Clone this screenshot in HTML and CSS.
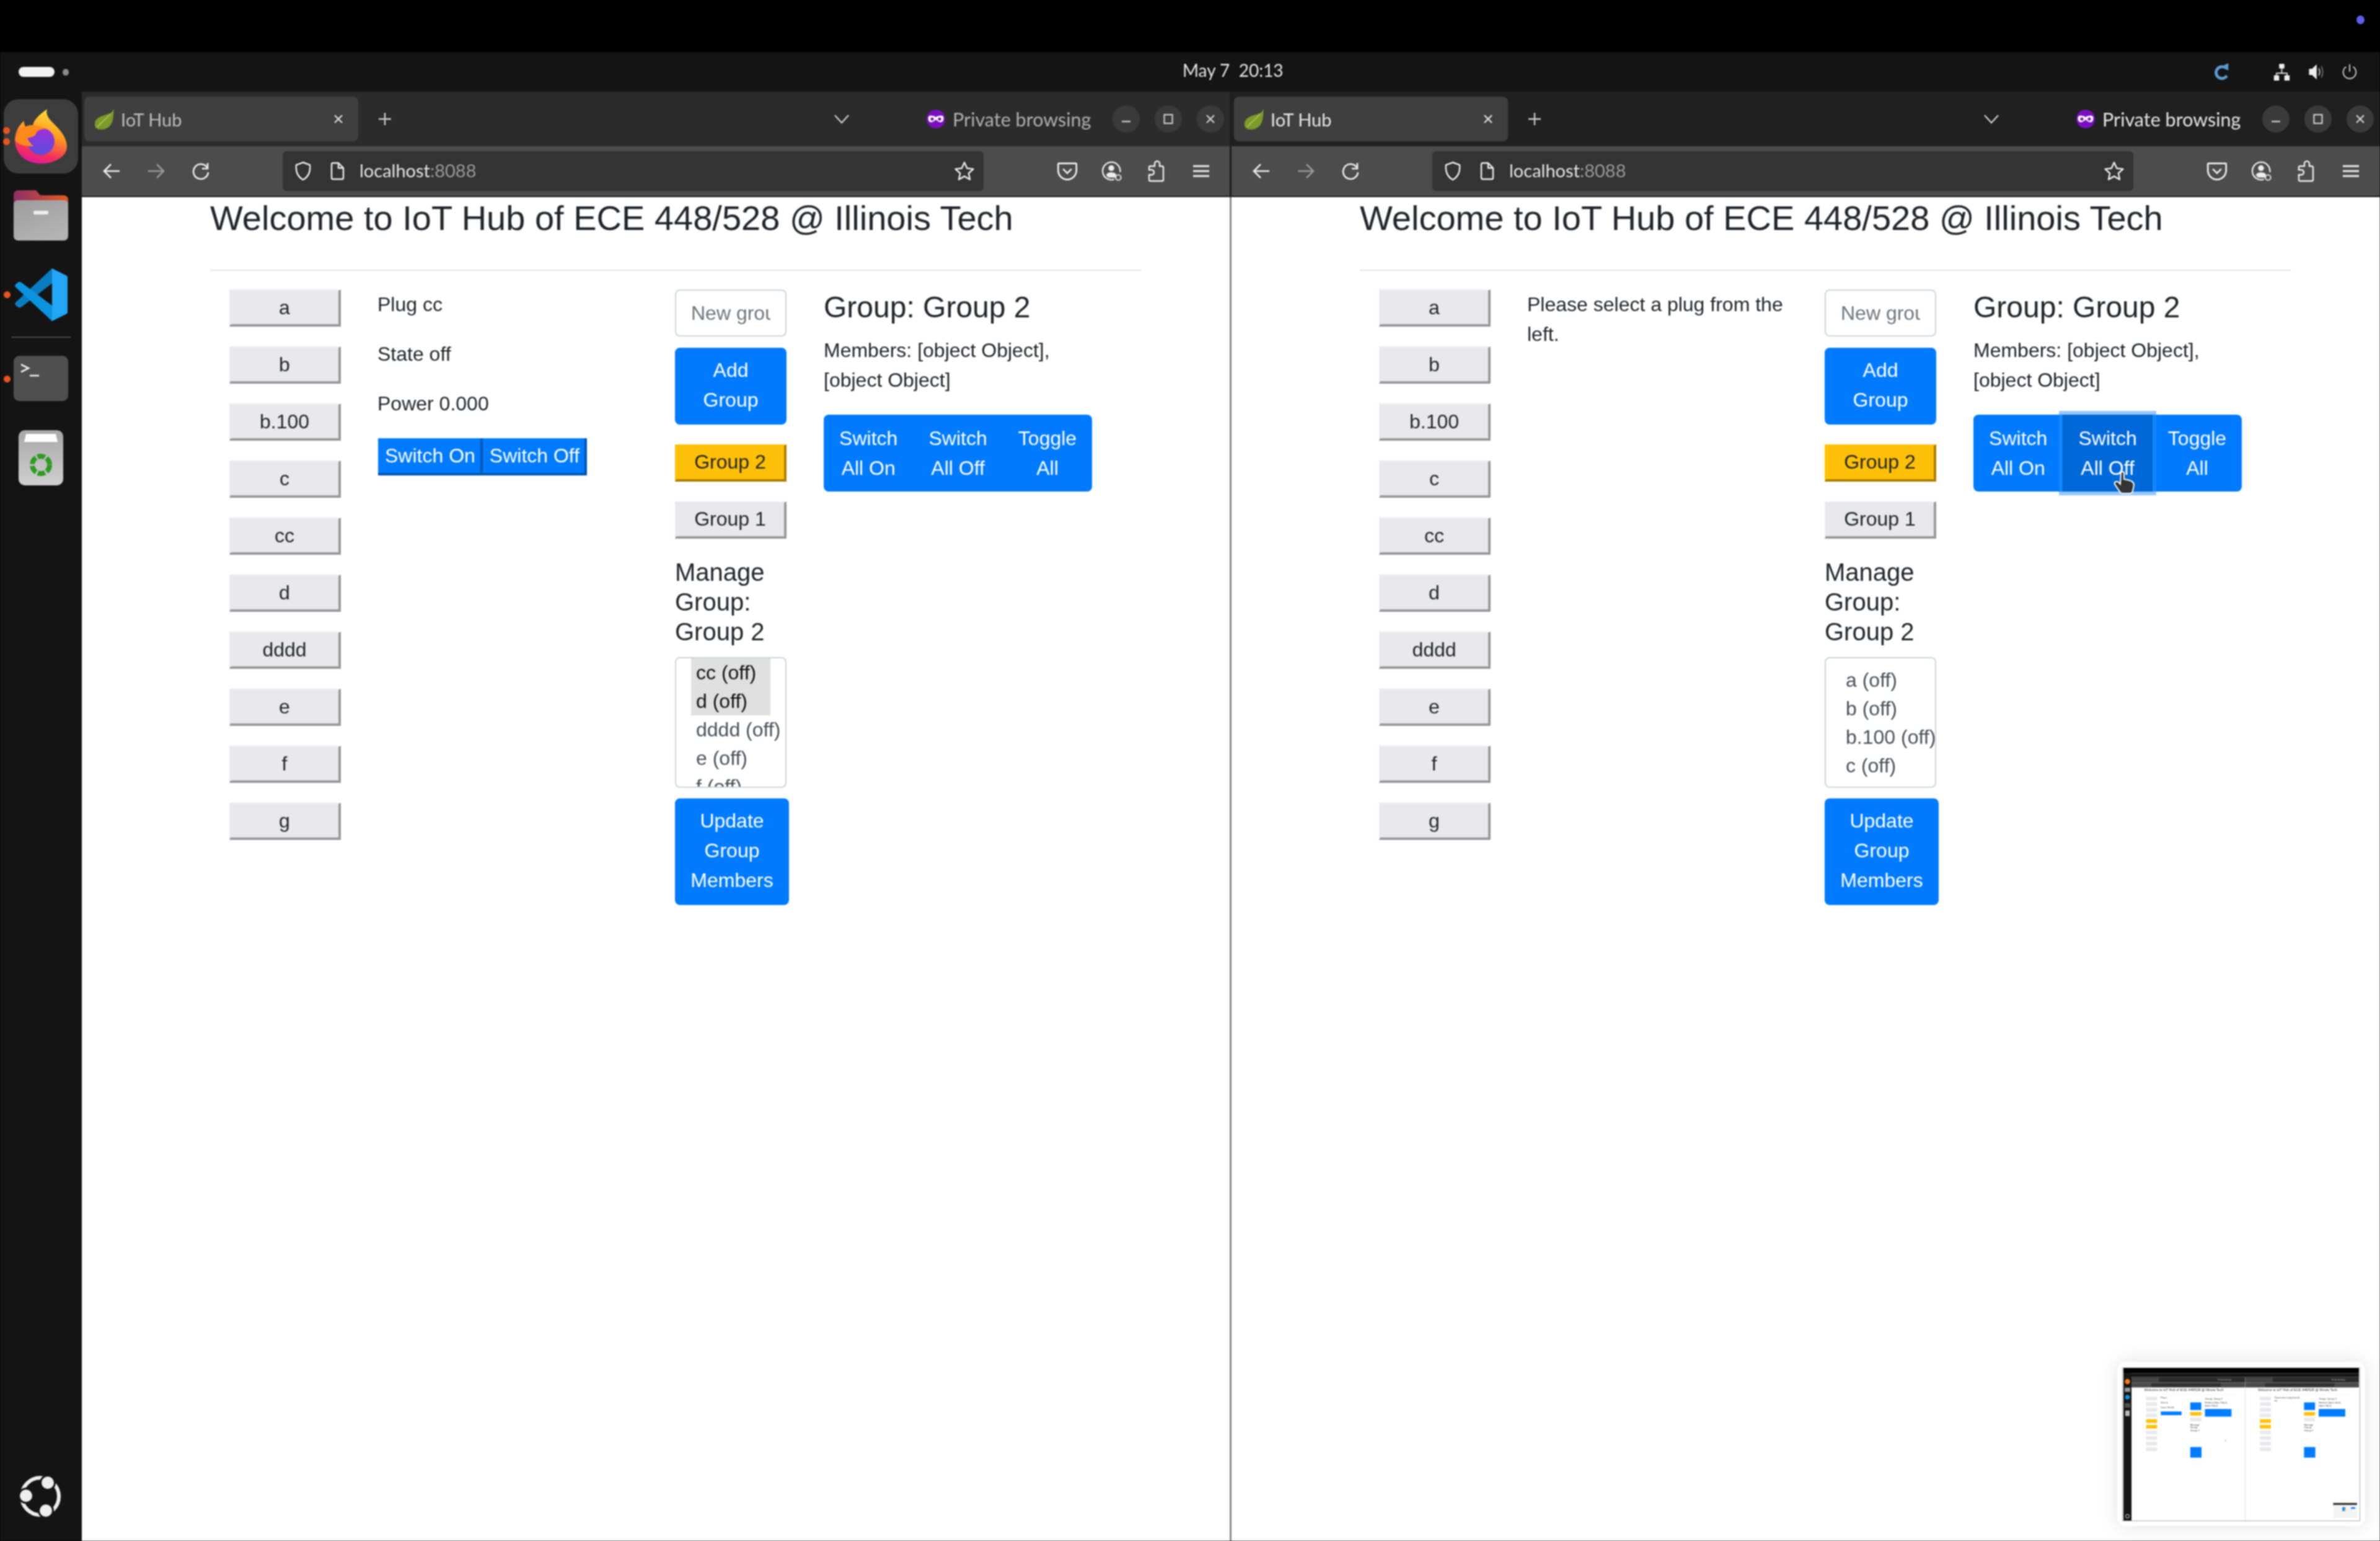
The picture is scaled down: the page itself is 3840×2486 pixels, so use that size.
FILE: index.html
```html
<!DOCTYPE html>
<html lang="en">
<head>
  <meta charset="UTF-8">
  <title>IoT Hub</title>
  <link rel="stylesheet" href="styles.css">
</head>
<body>
  <svg class="sprites">
    <symbol id="i-leaf" viewBox="0 0 33 34"><path d="M31 0C30 6 27 8 19 10 8 13 0 17 1 27c0 4 4 7 10 7 10 0 17-6 19-16 1-6 2-12 1-18z" fill="#7d9a2c"/><path d="M26 9C20 16 12 22 5 30" stroke="#a8bf45" stroke-width="2" fill="none"/></symbol>
    <symbol id="i-close" viewBox="0 0 20 20"><path d="M4 4l12 12M16 4L4 16" stroke="currentColor" stroke-width="2.4" fill="none"/></symbol>
    <symbol id="i-plus" viewBox="0 0 24 24"><path d="M12 2v20M2 12h20" stroke="currentColor" stroke-width="2.4" fill="none"/></symbol>
    <symbol id="i-chevron" viewBox="0 0 26 16"><path d="M2 2l11 12L24 2" stroke="currentColor" stroke-width="2.4" fill="none"/></symbol>
    <symbol id="i-private" viewBox="0 0 30 30"><circle cx="15" cy="15" r="15" fill="#7a0fc0"/><path d="M3 11c3-2 7-2 12 1 5-3 9-3 12-1 1 4 0 8-3 9-4 1-6-2-9-4-3 2-5 5-9 4-3-1-4-5-3-9z" fill="#fff"/><circle cx="9" cy="15" r="2.6" fill="#7a0fc0"/><circle cx="21" cy="15" r="2.6" fill="#7a0fc0"/></symbol>
    <symbol id="i-min" viewBox="0 0 20 20"><path d="M3 14h14" stroke="currentColor" stroke-width="2.4"/></symbol>
    <symbol id="i-max" viewBox="0 0 20 20"><rect x="3.5" y="3" width="13" height="14" stroke="currentColor" stroke-width="2.2" fill="none"/></symbol>
    <symbol id="i-back" viewBox="0 0 30 30"><path d="M28 15H3M14 4L3 15l11 11" stroke="currentColor" stroke-width="2.6" fill="none"/></symbol>
    <symbol id="i-forward" viewBox="0 0 30 30"><path d="M2 15h25M16 4l11 11-11 11" stroke="currentColor" stroke-width="2.6" fill="none"/></symbol>
    <symbol id="i-reload" viewBox="0 0 30 30"><path d="M25 9A12 12 0 1 0 27 17" stroke="currentColor" stroke-width="2.6" fill="none"/><path d="M26 2v9h-9" stroke="currentColor" stroke-width="2.6" fill="none"/></symbol>
    <symbol id="i-shield" viewBox="0 0 28 32"><path d="M14 2l11 4c1 10-2 19-11 24C5 25 2 16 3 6z" stroke="currentColor" stroke-width="2.4" fill="none"/></symbol>
    <symbol id="i-doc" viewBox="0 0 24 30"><path d="M3 4q0-2 2-2h9l8 8v16q0 2-2 2H5q-2 0-2-2zM14 2v8h8" stroke="currentColor" stroke-width="2.4" fill="none"/></symbol>
    <symbol id="i-star" viewBox="0 0 34 34"><path d="M17 3l4.300 9.500 10.200 1.100-7.600 6.900 2.100 10.100-9-5.200-9 5.200 2.100-10.100-7.600-6.900 10.200-1.100z" stroke="currentColor" stroke-width="2.400" fill="none" stroke-linejoin="round"/></symbol>
    <symbol id="i-pocket" viewBox="0 0 30 30"><path d="M3 4h24q1 0 1 1v9a13 13 0 0 1-26 0V5q0-1 1-1z" stroke="currentColor" stroke-width="2.400" fill="none"/><path d="M9 12l6 6 6-6" stroke="currentColor" stroke-width="2.400" fill="none"/></symbol>
    <symbol id="i-account" viewBox="0 0 36 36"><path d="M22 32a15 15 0 1 1 10-12" stroke="currentColor" stroke-width="2.400" fill="none"/><circle cx="17" cy="13" r="5" fill="currentColor"/><path d="M8 25c2-6 14-6 17-2v6H12z" fill="currentColor"/><circle cx="29" cy="29" r="4.500" stroke="currentColor" stroke-width="2" fill="none"/></symbol>
    <symbol id="i-puzzle" viewBox="0 0 30 36"><path d="M5 34q-2 0-2-2v-8h4a4 4 0 0 0 0-8H3v-4q0-2 2-2h7V6a4 4 0 0 1 8 0v4h3q3 0 3 2v20q0 2-2 2z" stroke="currentColor" stroke-width="2.400" fill="none"/></symbol>
    <symbol id="i-menu" viewBox="0 0 26 20"><path d="M0 2h26M0 10h26M0 18h26" stroke="currentColor" stroke-width="2.800"/></symbol>
  </svg>

  <div class="desktop">
    <div class="top-strip"><span class="rec-dot"></span></div>

    <div class="panel">
      <div class="panel-left"><span class="pill"></span><span class="pill-dot"></span></div>
      <div class="clock">May 7&nbsp; 20:13</div>
      <div class="tray">
        <svg class="tray-sync" viewBox="0 0 28 38"><path d="M20 10A12 12 0 1 0 24 27" stroke="#5b9bd5" stroke-width="6" fill="none"/><path d="M12 9L27 1v15z" fill="#5b9bd5"/></svg>
        <svg class="tray-net" viewBox="0 0 32 32"><path d="M16 8v10M6 24v-6h20v6" stroke="#eee" stroke-width="2" fill="none"/><rect x="11" y="0" width="10" height="9" rx="1" fill="#eee"/><rect x="1" y="22" width="10" height="10" rx="1" fill="#eee"/><rect x="21" y="22" width="10" height="10" rx="1" fill="#eee"/></svg>
        <svg class="tray-vol" viewBox="0 0 30 34"><path d="M1 11h6l9-9v30l-9-9H1z" fill="#eee"/><path d="M20 10q4 7 0 14" stroke="#bbb" stroke-width="2.400" fill="none"/><path d="M25 6q6 11 0 22" stroke="#777" stroke-width="2" fill="none"/></svg>
        <svg class="tray-power" viewBox="0 0 30 34"><path d="M15 1v15" stroke="#ccc" stroke-width="2.400"/><path d="M8 6a13 13 0 1 0 14 0" stroke="#ccc" stroke-width="2.400" fill="none"/></svg>
      </div>
    </div>

    <div class="main">
      <div class="dock">
        <div class="dock-tile">
          <span class="run-dot run-dot-a"></span>
          <span class="run-dot run-dot-b"></span>
          <svg class="dock-firefox" viewBox="0 0 84 88">
            <defs>
              <linearGradient id="ff-outer" x1="0.7" y1="0" x2="0.4" y2="1">
                <stop offset="0" stop-color="#ffe53b"/><stop offset="0.45" stop-color="#ff9a1f"/><stop offset="0.8" stop-color="#f5305a"/><stop offset="1" stop-color="#e0189a"/>
              </linearGradient>
              <linearGradient id="ff-ball" x1="0.5" y1="0" x2="0.5" y2="1">
                <stop offset="0" stop-color="#a02fd8"/><stop offset="1" stop-color="#5a4ee0"/>
              </linearGradient>
            </defs>
            <path d="M52 0C48 12 60 20 70 31c9 10 14 20 14 30A42 27 0 0 1 42 88C18 88 0 72 0 50c0-12 5-20 9-25l5-6 3 11c3-3 8-4 12-4 2-10 12-18 23-26z" fill="url(#ff-outer)"/>
            <circle cx="42" cy="52" r="22" fill="url(#ff-ball)"/>
            <path d="M0 50c2-10 10-22 24-24 8-1 18 2 26 6-8 0-14 2-16 8-2 4-8 6-14 6 2 6 6 10 10 14-12 0-24-2-30-10z" fill="#ff8a1c"/>
          </svg>
        </div>
        <svg class="dock-files" viewBox="0 0 88 81">
          <defs>
            <linearGradient id="files-back" x1="0" y1="0" x2="1" y2="0"><stop offset="0" stop-color="#8f2e68"/><stop offset="1" stop-color="#e05a20"/></linearGradient>
            <linearGradient id="files-front" x1="0" y1="0" x2="0.6" y2="1"><stop offset="0" stop-color="#9c9c9c"/><stop offset="1" stop-color="#b4b4b4"/></linearGradient>
          </defs>
          <path d="M0 8q0-8 8-8h28l7 8h37q8 0 8 8v30H0z" fill="url(#files-back)"/>
          <rect x="0" y="16" width="88" height="65" rx="7" fill="url(#files-front)"/>
          <rect x="32" y="33" width="24" height="6" rx="2" fill="#eee"/>
        </svg>
        <div class="dock-code">
          <span class="run-dot run-dot-c"></span>
          <svg class="dock-vscode" viewBox="0 0 85 85">
            <path d="M60 0v24L11 62q-4 3-8-1l-2-2q-2-3 1-5z" fill="#0a7cc2"/>
            <path d="M60 85V60L11 23q-4-3-8 1l-2 2q-2 3 1 5z" fill="#0c93e0"/>
            <path d="M60 0l22 11q3 1 3 4v55q0 3-3 4L60 85z" fill="#22a6f7"/>
          </svg>
        </div>
        <div class="dock-sep"></div>
        <div class="dock-term">
          <span class="run-dot run-dot-d"></span>
          <svg class="term-prompt" viewBox="0 0 30 24"><path d="M1 3l12 6-12 6" stroke="#eee" stroke-width="2.600" fill="none"/><path d="M15 21h15" stroke="#eee" stroke-width="2.600"/></svg>
        </div>
        <svg class="dock-trash" viewBox="0 0 72 89">
          <defs><linearGradient id="trash-body" x1="0" y1="0" x2="0" y2="1"><stop offset="0" stop-color="#a8a8a8"/><stop offset="1" stop-color="#d0d0d0"/></linearGradient></defs>
          <rect width="72" height="89" rx="10" fill="url(#trash-body)"/>
          <path d="M9 19l3-13h48l3 13z" fill="#fff"/>
          <circle cx="36" cy="56" r="14" stroke="#2f9a22" stroke-width="8" stroke-dasharray="12 3" fill="none"/>
        </svg>
        <svg class="dock-ubuntu" viewBox="0 0 72 72">
          <circle cx="35" cy="35" r="30" stroke="#eee" stroke-width="6" fill="none"/>
          <circle cx="12" cy="34" r="13" fill="#141414"/><circle cx="47" cy="13" r="13" fill="#141414"/><circle cx="44" cy="58" r="13" fill="#141414"/>
          <circle cx="12" cy="34" r="10" fill="#eee"/><circle cx="47" cy="13" r="10" fill="#eee"/><circle cx="44" cy="58" r="10" fill="#eee"/>
        </svg>
      </div>

      <div class="window window-left">
        <div class="tabbar">
          <div class="tab">
            <svg class="fav"><use href="#i-leaf"/></svg>
            <span class="tab-title">IoT Hub</span>
            <svg class="tab-close"><use href="#i-close"/></svg>
          </div>
          <svg class="new-tab"><use href="#i-plus"/></svg>
          <svg class="tab-list"><use href="#i-chevron"/></svg>
          <svg class="private-icon"><use href="#i-private"/></svg>
          <span class="private-label">Private browsing</span>
          <div class="win-controls">
            <span class="win-btn"><svg><use href="#i-min"/></svg></span>
            <span class="win-btn"><svg><use href="#i-max"/></svg></span>
            <span class="win-btn"><svg><use href="#i-close"/></svg></span>
          </div>
        </div>
        <div class="toolbar">
          <div class="nav-btns">
            <svg class="tool"><use href="#i-back"/></svg>
            <svg class="tool tool-dim"><use href="#i-forward"/></svg>
            <svg class="tool"><use href="#i-reload"/></svg>
          </div>
          <div class="urlbar">
            <svg class="url-shield"><use href="#i-shield"/></svg>
            <svg class="url-doc"><use href="#i-doc"/></svg>
            <span class="url-text">localhost<span class="url-port">:8088</span></span>
            <svg class="url-star"><use href="#i-star"/></svg>
          </div>
          <div class="tool-right">
            <svg class="tool2"><use href="#i-pocket"/></svg>
            <svg class="tool2"><use href="#i-account"/></svg>
            <svg class="tool2"><use href="#i-puzzle"/></svg>
            <svg class="tool-menu"><use href="#i-menu"/></svg>
          </div>
        </div>
        <div class="page">
          <h1>Welcome to IoT Hub of ECE 448/528 @ Illinois Tech</h1>
          <hr>
          <div class="hub">
            <div class="plug-list">
              <button class="plug">a</button>
              <button class="plug">b</button>
              <button class="plug">b.100</button>
              <button class="plug">c</button>
              <button class="plug">cc</button>
              <button class="plug">d</button>
              <button class="plug">dddd</button>
              <button class="plug">e</button>
              <button class="plug">f</button>
              <button class="plug">g</button>
            </div>
            <div class="plug-detail">
              <p>Plug cc</p>
              <p>State off</p>
              <p>Power 0.000</p>
              <div class="switches">
                <button class="switch">Switch On</button><button class="switch">Switch Off</button>
              </div>
            </div>
            <div class="group-col">
              <input class="group-input" type="text" placeholder="New group">
              <button class="btn-primary add-group">Add Group</button>
              <button class="plug plug-on">Group 2</button>
              <button class="plug">Group 1</button>
              <h5>Manage Group: Group 2</h5>
              <div class="member-select scrolled">
                <div class="opt opt-sel">cc (off)</div>
                <div class="opt opt-sel">d (off)</div>
                <div class="opt">dddd (off)</div>
                <div class="opt">e (off)</div>
                <div class="opt">f (off)</div>
              </div>
              <button class="btn-primary update-btn">Update Group Members</button>
            </div>
            <div class="group-detail">
              <h4>Group: Group 2</h4>
              <p>Members: [object Object], [object Object]</p>
              <div class="btn-group">
                <button class="btn-primary">Switch All On</button>
                <button class="btn-primary">Switch All Off</button>
                <button class="btn-primary">Toggle All</button>
              </div>
            </div>
          </div>
        </div>
      </div>

      <div class="window window-right">
        <div class="tabbar">
          <div class="tab">
            <svg class="fav"><use href="#i-leaf"/></svg>
            <span class="tab-title">IoT Hub</span>
            <svg class="tab-close"><use href="#i-close"/></svg>
          </div>
          <svg class="new-tab"><use href="#i-plus"/></svg>
          <svg class="tab-list"><use href="#i-chevron"/></svg>
          <svg class="private-icon"><use href="#i-private"/></svg>
          <span class="private-label">Private browsing</span>
          <div class="win-controls">
            <span class="win-btn"><svg><use href="#i-min"/></svg></span>
            <span class="win-btn"><svg><use href="#i-max"/></svg></span>
            <span class="win-btn"><svg><use href="#i-close"/></svg></span>
          </div>
        </div>
        <div class="toolbar">
          <div class="nav-btns">
            <svg class="tool"><use href="#i-back"/></svg>
            <svg class="tool tool-dim"><use href="#i-forward"/></svg>
            <svg class="tool"><use href="#i-reload"/></svg>
          </div>
          <div class="urlbar">
            <svg class="url-shield"><use href="#i-shield"/></svg>
            <svg class="url-doc"><use href="#i-doc"/></svg>
            <span class="url-text">localhost<span class="url-port">:8088</span></span>
            <svg class="url-star"><use href="#i-star"/></svg>
          </div>
          <div class="tool-right">
            <svg class="tool2"><use href="#i-pocket"/></svg>
            <svg class="tool2"><use href="#i-account"/></svg>
            <svg class="tool2"><use href="#i-puzzle"/></svg>
            <svg class="tool-menu"><use href="#i-menu"/></svg>
          </div>
        </div>
        <div class="page">
          <h1>Welcome to IoT Hub of ECE 448/528 @ Illinois Tech</h1>
          <hr>
          <div class="hub">
            <div class="plug-list">
              <button class="plug">a</button>
              <button class="plug">b</button>
              <button class="plug">b.100</button>
              <button class="plug">c</button>
              <button class="plug">cc</button>
              <button class="plug">d</button>
              <button class="plug">dddd</button>
              <button class="plug">e</button>
              <button class="plug">f</button>
              <button class="plug">g</button>
            </div>
            <div class="plug-detail">
              <p>Please select a plug from the left.</p>
            </div>
            <div class="group-col">
              <input class="group-input" type="text" placeholder="New group">
              <button class="btn-primary add-group">Add Group</button>
              <button class="plug plug-on">Group 2</button>
              <button class="plug">Group 1</button>
              <h5>Manage Group: Group 2</h5>
              <div class="member-select">
                <div class="opt">a (off)</div>
                <div class="opt">b (off)</div>
                <div class="opt">b.100 (off)</div>
                <div class="opt">c (off)</div>
                <div class="opt">cc (off)</div>
              </div>
              <button class="btn-primary update-btn">Update Group Members</button>
            </div>
            <div class="group-detail">
              <h4>Group: Group 2</h4>
              <p>Members: [object Object], [object Object]</p>
              <div class="btn-group">
                <button class="btn-primary">Switch All On</button>
                <button class="btn-primary btn-hover">Switch All Off
                  <svg class="hand" viewBox="0 0 36 38"><path d="M12 2q3-2 5 0v11l9 2q7 2 7 8l-2 9q-1 4-5 4H15q-3 0-5-3L2 21q-1-3 2-4 2-1 4 1l3 3z" fill="#333" stroke="#fff" stroke-width="2"/></svg>
                </button>
                <button class="btn-primary">Toggle All</button>
              </div>
            </div>
          </div>
        </div>
      </div>
    </div>

    <!-- screenshot preview, bottom right -->
    <div class="preview">
      <svg class="preview-shot" viewBox="0 0 3840 2486">
        <defs>
          <filter id="soft"><feGaussianBlur stdDeviation="5"/></filter>
          <g id="mini-win">
            <rect x="132" y="148" width="1853" height="88" fill="#2a2a2a"/>
            <rect x="136" y="156" width="442" height="72" rx="8" fill="#444"/>
            <rect x="132" y="236" width="1853" height="80" fill="#4c4c4c"/>
            <rect x="456" y="244" width="1131" height="64" rx="6" fill="#333"/>
            <text x="1537" y="202" class="mini-small" fill="#bbb">Private browsing</text>
            <text x="339" y="372" class="mini-h">Welcome to IoT Hub of ECE 448/528 @ Illinois Tech</text>
            <rect x="339" y="435" width="1500" height="2" fill="#ddd"/>
            <g fill="#e9e9ed">
              <rect x="370" y="466" width="180" height="60"/><rect x="370" y="558" width="180" height="60"/><rect x="370" y="650" width="180" height="60"/><rect x="370" y="742" width="180" height="60"/>
              <rect x="370" y="1018" width="180" height="60"/><rect x="370" y="1110" width="180" height="60"/><rect x="370" y="1202" width="180" height="60"/><rect x="370" y="1294" width="180" height="60"/>
              <rect x="1090" y="808" width="180" height="60"/>
            </g>
            <rect x="370" y="834" width="180" height="60" fill="#ffc107"/><rect x="370" y="926" width="180" height="60" fill="#ffc107"/><rect x="1090" y="716" width="180" height="60" fill="#ffc107"/>
            <rect x="1090" y="560" width="180" height="124" fill="#007bff"/><rect x="1090" y="1288" width="184" height="172" fill="#007bff"/><rect x="1329" y="668" width="433" height="124" fill="#007bff"/>
            <text x="1330" y="512" class="mini-t2">Group: Group 2</text>
            <text x="1330" y="575" class="mini-t">Members: [object Object],</text><text x="1330" y="623" class="mini-t">[object Object]</text>
            <text x="1090" y="935" class="mini-t2">Manage</text><text x="1090" y="983" class="mini-t2">Group:</text><text x="1090" y="1031" class="mini-t2">Group 2</text>
          </g>
        </defs>
        <rect width="3840" height="2486" fill="#fff"/>
        <g filter="url(#soft)">
          <rect width="3840" height="84"/>
          <rect y="84" width="3840" height="64" fill="#141414"/>
          <rect y="84" width="132" height="2402" fill="#141414"/>
          <use href="#mini-win"/>
          <use href="#mini-win" x="1855"/>
          <rect x="1985" y="318" width="3" height="2168" fill="#999"/>
          <rect x="610" y="708" width="338" height="60" fill="#007bff"/>
          <circle cx="66" cy="220" r="42" fill="#ff7a1a"/><rect x="22" y="320" width="88" height="68" fill="#999"/><circle cx="66" cy="476" r="38" fill="#0c93e0"/><rect x="22" y="573" width="88" height="73" fill="#4f4f4f"/><rect x="30" y="693" width="72" height="89" fill="#bbb"/><circle cx="65" cy="2415" r="30" fill="none" stroke="#eee" stroke-width="10"/>
          <text x="609" y="500" class="mini-t">Plug cc</text><text x="609" y="580" class="mini-t">State on</text><text x="609" y="660" class="mini-t">Power 139.043</text>
          <text x="2464" y="500" class="mini-t">Please select a plug from the</text><text x="2464" y="548" class="mini-t">left.</text>
          <rect x="3420" y="2200" width="390" height="246" fill="#f4f4f4"/><rect x="3420" y="2200" width="390" height="30" fill="#222"/><rect x="3570" y="2270" width="50" height="60" fill="#007bff"/><rect x="3710" y="2270" width="70" height="24" fill="#007bff"/><rect x="3600" y="2290" width="16" height="40" fill="#ffc107"/>
          <rect x="1658" y="1175" width="10" height="14" fill="#333"/>
        </g>
      </svg>
    </div>
  </div>
</body>
</html>
```

FILE: styles.css
```css
* {
  box-sizing: border-box;
}

body {
  margin: 0;
  background: #000;
  font-family: "Liberation Sans", Arial, sans-serif;
  color: #212529;
}

.sprites {
  display: none;
}

/* the reference is an upscaled capture, so everything sits a little soft */
.desktop {
  position: relative;
  width: 3840px;
  height: 2486px;
  overflow: hidden;
  display: flex;
  flex-direction: column;
  filter: blur(0.8px);
}

/* top of the desktop */
.top-strip {
  height: 84px;
  background: #000;
  position: relative;
}

.rec-dot {
  position: absolute;
  left: 3802px;
  top: 25px;
  width: 13px;
  height: 14px;
  border-radius: 50%;
  background: #5f5fe8;
}

.panel {
  height: 64px;
  background: #141414;
  display: flex;
  align-items: center;
  font-family: Lato, "Noto Sans", sans-serif;
}

.panel-left {
  width: 1908px;
  flex: none;
  padding-left: 30px;
  display: flex;
  align-items: center;
  gap: 13px;
}

.pill {
  width: 58px;
  height: 16px;
  border-radius: 8px;
  background: #f2f2f2;
}

.pill-dot {
  width: 10px;
  height: 11px;
  border-radius: 50%;
  background: #8a8a8a;
}

.clock {
  font-size: 28px;
  line-height: 28px;
  color: #e4e4e4;
  margin-top: -6px;
}

.tray {
  display: flex;
  align-items: center;
  justify-content: flex-end;
  margin-left: auto;
  padding-right: 35px;
}

.tray-sync {
  width: 26px;
  height: 30px;
}

.tray-net {
  width: 31px;
  height: 27px;
  margin-left: 68px;
}

.tray-vol {
  width: 28px;
  height: 28px;
  margin-left: 26px;
}

.tray-power {
  width: 28px;
  height: 27px;
  margin-left: 26px;
}

.main {
  flex: 1;
  display: flex;
  min-height: 0;
}

/* dock */
.dock {
  width: 132px;
  flex: none;
  background: #141414;
  display: flex;
  flex-direction: column;
  align-items: center;
  padding-top: 12px;
  padding-bottom: 35px;
}

.dock-tile {
  position: relative;
  width: 120px;
  height: 120px;
  border-radius: 24px;
  background: #3c3c3c;
  display: flex;
  align-items: center;
  justify-content: center;
}

.dock-firefox {
  width: 84px;
  height: 88px;
}

.dock-files {
  width: 88px;
  height: 81px;
  margin-top: 27px;
}

.dock-code {
  width: 132px;
  height: 85px;
  margin-top: 45px;
  display: flex;
  justify-content: center;
  position: relative;
}

.dock-vscode {
  width: 85px;
  height: 85px;
}

.dock-sep {
  width: 96px;
  height: 2px;
  background: #444;
  margin-top: 25px;
}

.dock-term {
  position: relative;
  width: 88px;
  height: 73px;
  margin-top: 29px;
  border-radius: 9px;
  background: #4f4f4f;
}

.term-prompt {
  position: absolute;
  left: 11px;
  top: 11px;
  width: 30px;
  height: 24px;
}

.dock-trash {
  width: 72px;
  height: 89px;
  margin-top: 47px;
}

.dock-ubuntu {
  width: 72px;
  height: 72px;
  margin-top: auto;
}

.run-dot {
  position: absolute;
  width: 11px;
  height: 11px;
  border-radius: 50%;
  background: #e9541f;
}

.run-dot-a {
  left: -1px;
  top: 45px;
}

.run-dot-b {
  left: -1px;
  top: 63px;
}

.run-dot-c {
  left: 6px;
  top: 37px;
}

.run-dot-d {
  left: -16px;
  top: 32px;
}

/* browser window */
.window {
  width: 1853px;
  flex: none;
  display: flex;
  flex-direction: column;
  background: #fff;
}

.window-left {
  width: 1855px;
}

.window-left .tabbar,
.window-left .toolbar {
  border-right: 3px solid #1e1e1e;
}

.window-left .page {
  border-right: 3px solid #8a8a8a;
}

.tabbar {
  height: 88px;
  background: #2b2b2b;
  display: flex;
  align-items: center;
  padding-left: 4px;
  font-family: Lato, "Noto Sans", sans-serif;
}

.window-right .tabbar {
  background: #202020;
}

.tab {
  width: 442px;
  height: 72px;
  border-radius: 8px;
  background: #3f3f3f;
  display: flex;
  align-items: center;
  padding-left: 16px;
  color: #bdbdbd;
  font-size: 29px;
}

.window-right .tab {
  color: #e8e8e8;
}

.fav {
  width: 33px;
  height: 34px;
}

.tab-title {
  margin-left: 10px;
}

.tab-close {
  width: 20px;
  height: 20px;
  margin-left: auto;
  margin-right: 22px;
  color: #ddd;
}

.new-tab {
  width: 24px;
  height: 24px;
  margin-left: 31px;
  color: #ccc;
}

.tab-list {
  width: 26px;
  height: 16px;
  margin-left: 712px;
  color: #ccc;
}

.private-icon {
  width: 30px;
  height: 30px;
  margin-left: 124px;
}

.private-label {
  width: 221px;
  margin-left: 12px;
  font-size: 30.5px;
  color: #b0b0b0;
  white-space: nowrap;
}

.window-right .private-label {
  color: #e4e4e4;
}

.win-controls {
  display: flex;
  flex: none;
  gap: 24px;
  margin-left: 37px;
}

.win-btn {
  width: 44px;
  height: 44px;
  border-radius: 50%;
  background: #3a3a3a;
  display: flex;
  align-items: center;
  justify-content: center;
  color: #ccc;
}

.win-btn svg {
  width: 20px;
  height: 20px;
}

.toolbar {
  height: 82px;
  background: #4c4c4c;
  border-bottom: 2px solid #1c1c1c;
  display: flex;
  align-items: center;
  padding-left: 33px;
  color: #eee;
  font-family: Lato, "Noto Sans", sans-serif;
}

.nav-btns {
  display: flex;
  gap: 42px;
}

.tool {
  width: 30px;
  height: 30px;
}

.tool-dim {
  color: #999;
}

.urlbar {
  width: 1131px;
  height: 64px;
  margin-left: 117px;
  border-radius: 6px;
  background: #333;
  display: flex;
  align-items: center;
  padding: 0 14px 0 19px;
}

.url-shield {
  width: 28px;
  height: 32px;
}

.url-doc {
  width: 24px;
  height: 30px;
  margin-left: 29px;
}

.url-text {
  margin-left: 24px;
  margin-top: -3px;
  font-size: 29px;
  color: #e4e4e4;
}

.url-port {
  color: #9a9a9a;
}

.url-star {
  width: 34px;
  height: 34px;
  margin-left: auto;
}

.tool-right {
  display: flex;
  align-items: center;
  gap: 38px;
  margin-left: 118px;
}

.tool2 {
  width: 34px;
  height: 36px;
}

.tool-menu {
  width: 26px;
  height: 20px;
  margin-left: 4px;
}

/* the hub page */
.page {
  flex: 1;
  padding-left: 207px;
}

h1 {
  margin: 0;
  font-size: 56px;
  font-weight: 500;
  line-height: 67px;
  color: #212529;
  white-space: nowrap;
}

hr {
  width: 1502px;
  height: 2px;
  margin: 50px 0 30px;
  border: 0;
  background: #e3e3e3;
}

.hub {
  display: grid;
  grid-template-columns: 240px 480px 240px 480px;
  font-size: 32px;
  line-height: 48px;
}

.hub button {
  font-family: inherit;
  font-size: 32px;
  line-height: 48px;
  cursor: pointer;
}

.plug-list,
.group-col,
.plug-detail,
.group-detail {
  padding: 0 30px;
}

.plug-list {
  padding-left: 31px;
}

.plug-list .plug {
  display: block;
  margin-bottom: 32px;
}

.plug {
  width: 180px;
  height: 60px;
  padding: 0;
  background: #e9e9ed;
  color: #212529;
  border-style: solid;
  border-width: 2px 4px 4px 2px;
  border-color: #ececee #999 #999 #ececee;
}

.plug-on {
  background: #ffc107;
  border-color: #ffc107 #a87f05 #a87f05 #ffc107;
}

.group-col .plug {
  padding-bottom: 3px;
}

p {
  margin: 0 0 32px;
}

.switches {
  display: flex;
  margin-top: 3px;
  padding-left: 1px;
}

.switch {
  height: 60px;
  padding: 0 8px 0 11px;
  background: #007bff;
  color: #fff;
  border-style: solid;
  border-width: 0 4px 4px 0;
  border-color: #0056b3;
}

.group-col {
  display: flex;
  flex-direction: column;
  align-items: flex-start;
}

.group-input {
  width: 180px;
  height: 76px;
  padding: 0 24px;
  border: 2px solid #ced4da;
  border-radius: 8px;
  font-family: inherit;
  font-size: 32px;
  color: #495057;
}

.group-input::placeholder {
  color: #6c757d;
  opacity: 1;
}

.btn-primary {
  background: #007bff;
  color: #fff;
  border: 2px solid #007bff;
  border-radius: 8px;
  padding: 12px 24px;
  text-align: center;
}

.add-group {
  width: 180px;
  margin-top: 18px;
  margin-bottom: 32px;
  padding-top: 10px;
  padding-bottom: 14px;
}

.group-col .plug-on {
  margin-bottom: 32px;
}

h5 {
  margin: 30px 0 17px;
  font-size: 40px;
  font-weight: 500;
  line-height: 48px;
}

.member-select {
  width: 180px;
  height: 211px;
  padding: 12px 0 0 24px;
  border: 2px solid #ced4da;
  border-radius: 8px;
  overflow: hidden;
  background: #fff;
}

.member-select.scrolled {
  padding-top: 0;
}

.opt {
  width: 128px;
  height: 46px;
  padding-left: 8px;
  line-height: 46px;
  white-space: nowrap;
  color: #495057;
}

.opt-sel {
  background: #e0e0e0;
  color: #111;
}

.update-btn {
  width: 184px;
  margin-top: 17px;
  padding: 10px 8px 14px;
}

h4 {
  margin: 0 0 16px;
  font-size: 48px;
  font-weight: 500;
  line-height: 58px;
}

.group-detail p {
  margin-bottom: 32px;
  width: 420px;
}

.btn-group {
  display: flex;
}

.btn-group .btn-primary {
  width: 144.4px;
  flex: none;
  padding: 12px 20px;
  border-radius: 0;
}

.btn-group .btn-primary:first-child {
  border-radius: 8px 0 0 8px;
}

.btn-group .btn-primary:last-child {
  border-radius: 0 8px 8px 0;
}

.btn-group .btn-hover {
  position: relative;
  z-index: 1;
  background: #0069d9;
  border-color: #0062cc;
  box-shadow: 0 0 0 6px rgba(38, 143, 255, 0.5);
}

.hand {
  position: absolute;
  left: 80px;
  top: 89px;
  width: 36px;
  height: 38px;
}

/* screenshot preview */
.preview {
  position: absolute;
  left: 3416px;
  top: 2197px;
  width: 400px;
  height: 265px;
  padding: 9px 8px;
  background: #fff;
  border-radius: 14px;
  box-shadow: 0 0 30px rgba(0, 0, 0, 0.12);
}

.preview-shot {
  display: block;
  width: 384px;
  height: 248px;
  border: 1px solid #aaa;
}

.mini-h {
  font-size: 56px;
  fill: #333;
}

.mini-t {
  font-size: 32px;
  fill: #444;
}

.mini-t2 {
  font-size: 42px;
  fill: #444;
}

.mini-small {
  font-size: 30px;
}
```
